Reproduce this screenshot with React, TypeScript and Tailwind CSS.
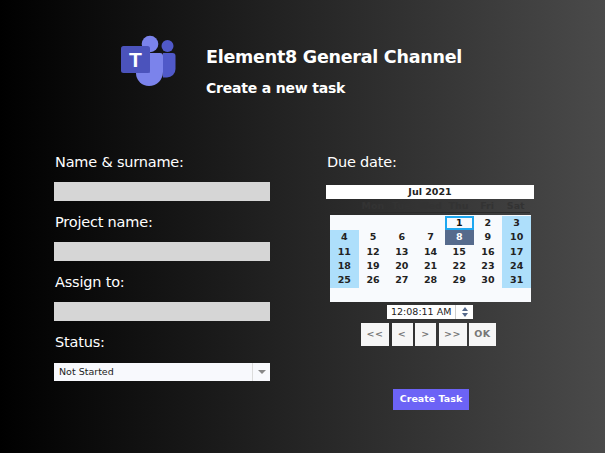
const font = { fontFamily: '"DejaVu Sans", sans-serif' };

function Logo() {
  return (
    <svg width="56" height="54" viewBox="0 0 56 54" className="block shrink-0">
      <circle cx="47.500" cy="13" r="6" fill="#5059c9" />
      <path d="M43 20h9.500a3 3 0 0 1 3 3v13a8.500 8.500 0 0 1-8.500 8.500h-4z" fill="#5059c9" />
      <circle cx="30" cy="11" r="8.300" fill="#7b83eb" />
      <path d="M18 20h22a3 3 0 0 1 3 3v16a14 14 0 0 1-14 14a13 13 0 0 1-13-13V22a2 2 0 0 1 2-2z" fill="#7b83eb" />
      <path d="M18 20h12v20H16V22a2 2 0 0 1 2-2z" fill="#4b53bc" opacity="0.55" />
      <rect x="1" y="13" width="29" height="27" rx="2.500" fill="#4b53bc" />
      <text x="15.500" y="34" textAnchor="middle" fontSize="21" fontWeight="700" fill="#fff" style={{ fontFamily: '"Liberation Sans", sans-serif' }}>T</text>
    </svg>
  );
}

function Field({ label, mt }: { label: string; mt: string }) {
  return (
    <div className={mt}>
      <div className="h-[20px] pl-px text-[14.500px] leading-[20px] tracking-[-0.2px] text-white">{label}</div>
      <div className="mt-[10px] h-[19px] bg-[#d6d6d6]" />
    </div>
  );
}

const rows: (number | null)[][] = [
  [null, null, null, null, 1, 2, 3],
  [4, 5, 6, 7, 8, 9, 10],
  [11, 12, 13, 14, 15, 16, 17],
  [18, 19, 20, 21, 22, 23, 24],
  [25, 26, 27, 28, 29, 30, 31],
  [null, null, null, null, null, null, null],
];

function dayClass(d: number | null, col: number) {
  if (d === 1) return "bg-[#f7f9fd] outline outline-2 -outline-offset-2 outline-[#1ea7f0] text-[#111]";
  if (d === 8) return "bg-[#566a8c] text-white";
  if (d !== null && (col === 0 || col === 6)) return "bg-[#aedffb] text-[#222]";
  return "text-[#222]";
}

function Calendar() {
  return (
    <div>
      <div className="h-[14px] bg-white text-center text-[9.500px] font-bold leading-[14px] text-[#222]">Jul 2021</div>
      <div className="mx-[4px] grid h-[14px] grid-cols-7 border-b border-[#2b2b2b] text-center text-[9.500px] font-bold leading-[13px] text-[#333]">
        {["", "Mon", "Tue", "Wed", "Thu", "Fri", "Sat"].map((d, i) => (
          <span key={i}>{d}</span>
        ))}
      </div>
      <div className="mx-[4px] mt-[2px] grid h-[87px] w-[201px] grid-cols-7 bg-[#f8fafd] pt-px">
        {rows.flatMap((r, ri) =>
          r.map((d, ci) => (
            <div
              key={`${ri}-${ci}`}
              className={`flex h-[14.300px] items-center justify-center text-[9.500px] font-bold ${dayClass(d, ci)}`}
            >
              {d}
            </div>
          )),
        )}
      </div>
    </div>
  );
}

function NavButton({ children, w }: { children: string; w: string }) {
  return (
    <button className={`flex h-[23px] items-center justify-center bg-[#f6f6f6] text-[9.500px] font-bold tracking-[0.5px] text-[#777] ${w}`}>
      {children}
    </button>
  );
}

export default function App() {
  return (
    <div
      className="h-[453px] w-[605px] overflow-hidden bg-[linear-gradient(to_right,#000000_0%,#4a4a4a_100%)] text-white"
      style={font}
    >
      <header className="flex pl-[120px] pt-[33px]">
        <Logo />
        <div className="ml-[30px] pt-[11px]">
          <h1 className="text-[17.500px] font-bold leading-[26px] tracking-[-0.25px]">Element8 General Channel</h1>
          <p className="mt-[8px] text-[14px] font-bold leading-[20px] tracking-[-0.2px]">Create a new task</p>
        </div>
      </header>

      <main className="flex pl-[54px] pt-[54px]">
        <section className="w-[216px]">
          <Field label="Name &amp; surname:" mt="" />
          <Field label="Project name:" mt="mt-[11px]" />
          <Field label="Assign to:" mt="mt-[11px]" />
          <div className="mt-[11px]">
            <div className="h-[20px] pl-px text-[14.500px] leading-[20px] tracking-[-0.2px]">Status:</div>
            <div className="mt-[11px] flex h-[18px] w-[216px] items-center bg-[#f8f9fd] text-[9.500px] text-[#222]">
              <span className="flex-1 pl-[5px]">Not Started</span>
              <span className="flex h-full w-[18px] items-center justify-center border-l border-[#dcdcdc]">
                <span className="h-0 w-0 border-x-[4px] border-t-[4px] border-x-transparent border-t-[#888]" />
              </span>
            </div>
          </div>
        </section>

        <section className="ml-[56px] w-[208px]">
          <div className="h-[20px] pl-px text-[14.500px] leading-[20px] tracking-[-0.2px]">Due date:</div>
          <div className="mt-[13px]">
            <Calendar />
          </div>
          <div className="ml-[61px] mt-[3px] flex h-[14px] w-[86px] items-center bg-white text-[9.500px] text-[#222]">
            <span className="flex-1 pl-[4px]">12:08:11 AM</span>
            <span className="flex h-full w-[18px] flex-col items-center justify-center gap-[2px] border-l border-[#ccc]">
              <span className="h-0 w-0 border-x-[3px] border-b-[4px] border-x-transparent border-b-[#566a8c]" />
              <span className="h-0 w-0 border-x-[3px] border-t-[4px] border-x-transparent border-t-[#566a8c]" />
            </span>
          </div>
          <div className="ml-[35px] mt-[4px] flex gap-[2.500px]">
            <NavButton w="w-[28px]">{"<<"}</NavButton>
            <NavButton w="w-[21px]">{"<"}</NavButton>
            <NavButton w="w-[21px]">{">"}</NavButton>
            <NavButton w="w-[28px]">{">>"}</NavButton>
            <NavButton w="w-[27px]">OK</NavButton>
          </div>
          <button className="ml-[67px] mt-[43px] block h-[21px] w-[76px] bg-[#6c63f6] text-[9.500px] font-bold text-white">
            Create Task
          </button>
        </section>
      </main>
    </div>
  );
}
